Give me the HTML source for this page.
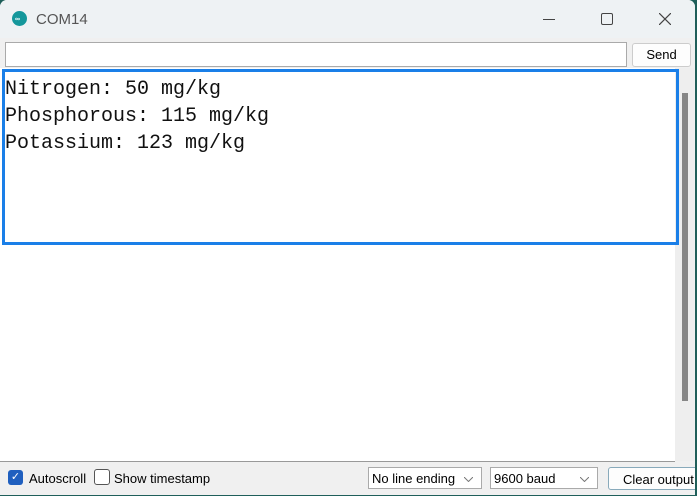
<!DOCTYPE html><html><head><style>
body{margin:0;width:697px;height:496px;overflow:hidden;background:#1f5f5a;font-family:"Liberation Sans",sans-serif;position:relative}
.win{position:absolute;left:0;top:0;width:695px;height:495px;background:#f0f0f0;border-radius:7px 7px 0 0;overflow:hidden}
.title{position:absolute;left:0;top:0;width:695px;height:38px;background:#eef2f4}
.abs{position:absolute}
.mono{font-family:"Liberation Mono",monospace;font-size:20px;color:#111;position:absolute;left:5px}
</style></head><body><div class="win">
<div class="title">
<div class="abs" style="left:12px;top:11px;width:15px;height:15px;border-radius:50%;background:#14979b"></div>
<div class="abs" style="left:15px;top:16px;color:#fff;font-size:7px;font-weight:bold">∞</div>
<div class="abs" style="left:36px;top:11px;font-size:15px;color:#555">COM14</div>
<div class="abs" style="left:543px;top:19px;width:12px;height:1px;background:#444"></div>
<div class="abs" style="left:601px;top:13px;width:10px;height:10px;border:1px solid #444;border-radius:2px"></div>
<svg class="abs" style="left:659px;top:13px" width="12" height="12"><path d="M0 0L12 12M12 0L0 12" stroke="#444" stroke-width="1.2"/></svg>
</div>
<div class="abs" style="left:5px;top:42px;width:620px;height:23px;background:#fff;border:1px solid #aaa"></div>
<div class="abs" style="left:632px;top:43px;width:57px;height:22px;background:#fdfdfd;border:1px solid #ccc;border-radius:3px;font-size:13px;text-align:center;line-height:22px">Send</div>
<div class="abs" style="left:0;top:68px;width:675px;height:393px;background:#fff;border-bottom:1px solid #999"></div>
<div class="abs" style="left:675px;top:68px;width:19px;height:393px;background:#eee"></div>
<div class="abs" style="left:682px;top:93px;width:6px;height:308px;background:#868686"></div>
<div class="abs" style="left:2px;top:69px;width:671px;height:170px;border:3px solid #1a7fe8"></div>
<div class="mono" style="top:78px">Nitrogen: 50 mg/kg</div>
<div class="mono" style="top:105px">Phosphorous: 115 mg/kg</div>
<div class="mono" style="top:132px">Potassium: 123 mg/kg</div>
<div class="abs" style="left:8px;top:470px;width:15px;height:15px;background:#1f5fbf;border-radius:3px;color:#fff;font-size:11px;text-align:center;line-height:15px">✓</div>
<div class="abs" style="left:29px;top:471px;font-size:13px">Autoscroll</div>
<div class="abs" style="left:94px;top:469px;width:14px;height:14px;border:1px solid #555;border-radius:3px;background:#fff"></div>
<div class="abs" style="left:114px;top:471px;font-size:13px">Show timestamp</div>
<div class="abs" style="left:368px;top:467px;width:114px;height:22px;background:#fff;border:1px solid #aaa;font-size:13px;line-height:22px;padding-left:3px;box-sizing:border-box">No line ending<svg class="abs" style="right:8px;top:9px" width="9" height="5"><path d="M0 0L4.5 4.5L9 0" stroke="#777" fill="none"/></svg></div>
<div class="abs" style="left:490px;top:467px;width:108px;height:22px;background:#fff;border:1px solid #aaa;font-size:13px;line-height:22px;padding-left:3px;box-sizing:border-box">9600 baud<svg class="abs" style="right:8px;top:9px" width="9" height="5"><path d="M0 0L4.5 4.5L9 0" stroke="#777" fill="none"/></svg></div>
<div class="abs" style="left:608px;top:467px;width:95px;height:23px;background:#fdfdfd;border:1px solid #8ab;border-radius:3px;font-size:13px;line-height:23px;padding-left:14px;box-sizing:border-box">Clear output</div>
</div></body></html>
